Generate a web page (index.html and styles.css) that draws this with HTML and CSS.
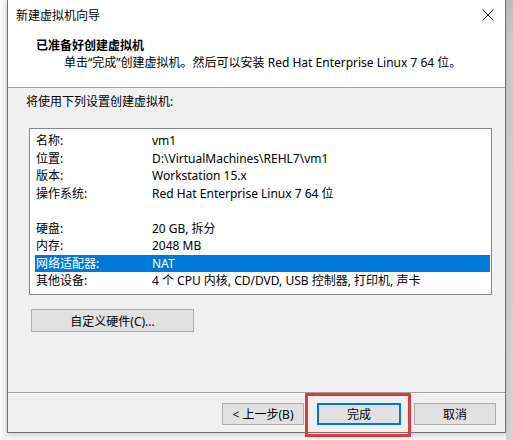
FILE: index.html
```html
<!DOCTYPE html>
<html lang="zh-CN">
<head>
<meta charset="utf-8">
<title>新建虚拟机向导</title>
<link rel="stylesheet" href="styles.css">
</head>
<body>
<div class="screen">
  <div class="left-strip"></div>
  <div class="window">
    <div class="titlebar">
      <span class="title">新建虚拟机向导</span>
      <svg class="close" width="12" height="12" viewBox="0 0 12 12"><path d="M0.5 0.5L11.5 11.5M11.5 0.5L0.5 11.5" stroke="#1a1a1a" stroke-width="1" fill="none"/></svg>
    </div>
    <div class="header">
      <div class="h-title">已准备好创建虚拟机</div>
      <div class="h-sub">单击“完成”创建虚拟机。然后可以安装 Red Hat Enterprise Linux 7 64 位。</div>
    </div>
    <div class="content">
      <div class="intro">将使用下列设置创建虚拟机:</div>
      <div class="listbox">
        <div class="row"><span class="k">名称:</span><span class="v">vm1</span></div>
        <div class="row"><span class="k">位置:</span><span class="v">D:\VirtualMachines\REHL7\vm1</span></div>
        <div class="row"><span class="k">版本:</span><span class="v">Workstation 15.x</span></div>
        <div class="row"><span class="k">操作系统:</span><span class="v">Red Hat Enterprise Linux 7 64 位</span></div>
        <div class="row blank"></div>
        <div class="row"><span class="k">硬盘:</span><span class="v">20 GB, 拆分</span></div>
        <div class="row"><span class="k">内存:</span><span class="v">2048 MB</span></div>
        <div class="row selected"><span class="k">网络适配器:</span><span class="v">NAT</span></div>
        <div class="row"><span class="k">其他设备:</span><span class="v">4 个 CPU 内核, CD/DVD, USB 控制器, 打印机, 声卡</span></div>
      </div>
      <button class="btn custom">自定义硬件(C)...</button>
    </div>
    <div class="footer">
      <button class="btn fbtn">&lt; 上一步(B)</button>
      <button class="btn fbtn primary">完成</button>
      <button class="btn fbtn">取消</button>
      <div class="redbox"></div>
    </div>
  </div>
  <div class="right-strip"></div>
</div>
</body>
</html>
```

FILE: styles.css
```css
html, body {
  margin: 0;
  padding: 0;
}
body {
  width: 513px;
  height: 440px;
  overflow: hidden;
  background: #f7f7f7;
  font-family: "Noto Sans", "Noto Sans CJK SC", sans-serif;
  font-size: 12px;
  color: #000;
}
.screen {
  display: flex;
  width: 513px;
  height: 440px;
}
.left-strip {
  width: 7px;
  height: 440px;
  background: linear-gradient(to right, #fbfbfb, #ececec);
}
.window {
  width: 497px;
  height: 432px;
  border-left: 1px solid #707070;
  border-right: 1px solid #707070;
  border-bottom: 1px solid #707070;
  display: flex;
  flex-direction: column;
  position: relative;
  background: #f0f0f0;
  box-shadow: 0 3px 4px rgba(0,0,0,0.12);
}
.right-strip {
  width: 7px;
  height: 440px;
  background: linear-gradient(to bottom, #b9bcc0 0, #c9c9c9 40px, #d2d2d2 100%);
}
.titlebar {
  height: 30px;
  background: #fff;
  display: flex;
  align-items: center;
  justify-content: space-between;
  padding: 0 11px 0 8px;
}
.title {
  font-size: 12px;
  color: #000;
}
.close {
  margin-top: -1px;
}
.header {
  background: #fff;
  border-bottom: 1px solid #a0a0a0;
  padding-left: 28px;
  padding-top: 7px;
  box-sizing: border-box;
  height: 58px;
}
.h-title {
  font-weight: bold;
  font-size: 12px;
  line-height: 17px;
}
.h-sub {
  padding-left: 28px;
  line-height: 17px;
}
.content {
  flex: 1;
  display: flex;
  flex-direction: column;
  align-items: flex-start;
  padding: 5px 0 0 18px;
  border-bottom: 1px solid #a0a0a0;
  box-shadow: 0 1px 0 #fff;
}
.intro {
  line-height: 17px;
  margin-bottom: 18px;
}
.listbox {
  margin-left: 3px;
  width: 463px;
  height: 167px;
  box-sizing: border-box;
  border: 1px solid #828790;
  background: #fff;
  padding: 3px 1px 0 5px;
}
.row {
  display: grid;
  grid-template-columns: 116px 1fr;
  height: 17.5px;
  line-height: 17.5px;
  padding-left: 1px;
}
.row.selected {
  background: #0078d7;
  color: #fff;
}
.btn {
  font-family: "Noto Sans", "Noto Sans CJK SC", sans-serif;
  font-size: 12px;
  background: #e1e1e1;
  border: 1px solid #adadad;
  color: #000;
  padding: 0;
  margin: 0;
}
.custom {
  margin-top: 14px;
  margin-left: 5px;
  width: 163px;
  height: 23px;
}
.footer {
  height: 39px;
  display: flex;
  align-items: center;
  padding-left: 214px;
  gap: 13px;
  position: relative;
  box-sizing: border-box;
  padding-top: 2px;
}
.fbtn {
  width: 82px;
  height: 22px;
}
.primary {
  border: 2px solid #0078d7;
  width: 84px;
}
.redbox {
  position: absolute;
  left: 297px;
  top: 0;
  width: 106px;
  height: 44px;
  box-sizing: border-box;
  border: 3px solid #e0393e;
}
```
